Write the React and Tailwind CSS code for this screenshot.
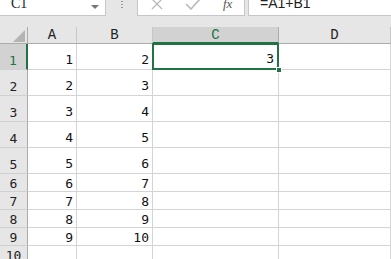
import React from 'react'

const rows = [
  { n: 1, a: '1', b: '2', c: '3', h: 'h-[26px]' },
  { n: 2, a: '2', b: '3', h: 'h-[26px]' },
  { n: 3, a: '3', b: '4', h: 'h-[26px]' },
  { n: 4, a: '4', b: '5', h: 'h-[26px]' },
  { n: 5, a: '5', b: '6', h: 'h-[26px]' },
  { n: 6, a: '6', b: '7', h: 'h-[18px]' },
  { n: 7, a: '7', b: '8', h: 'h-[18px]' },
  { n: 8, a: '8', b: '9', h: 'h-[18px]' },
  { n: 9, a: '9', b: '10', h: 'h-[18px]' },
  { n: 10, h: 'h-[18px]' },
]

const num = { fontFamily: '"DejaVu Sans Mono", monospace' }

function FormulaBar() {
  return (
    <div className="flex h-[24px] -mt-[8px] bg-[#e6e6e6]">
      <div className="w-[106px] bg-white border-r border-b border-[#c6c6c6] flex items-center justify-between pl-[11px] pr-[6px]">
        <span className="text-[14px] text-[#222]" style={{ fontFamily: '"Liberation Serif", serif' }}>C1</span>
        <span className="w-0 h-0 border-l-[4px] border-r-[4px] border-t-[4px] border-l-transparent border-r-transparent border-t-[#777] mt-[6px]" />
      </div>
      <div className="w-[31px] flex flex-col items-center justify-center gap-[2px]">
        <span className="w-[2px] h-[1px] bg-[#999]" />
        <span className="w-[2px] h-[1px] bg-[#999]" />
        <span className="w-[2px] h-[1px] bg-[#999]" />
      </div>
      <div className="w-[108px] bg-white border border-t-0 border-[#c6c6c6] flex items-center text-[#b9b9b9]">
        <svg width="12" height="12" viewBox="0 0 12 12" className="ml-[13px]" fill="none" stroke="currentColor" strokeWidth="1.3">
          <path d="M1 1 L11 11 M11 1 L1 11" />
        </svg>
        <svg width="16" height="12" viewBox="0 0 16 12" className="ml-[22px]" fill="none" stroke="currentColor" strokeWidth="1.6">
          <path d="M1 6 L6 11 L15 1" />
        </svg>
        <span className="ml-[22px] italic text-[13px] text-[#555]" style={{ fontFamily: '"Liberation Serif", serif' }}>fx</span>
      </div>
      <div className="w-[3px]" />
      <div className="flex-1 bg-white border-l border-b border-[#c6c6c6] flex items-center pl-[11px]">
        <span className="text-[14px] text-[#222]" style={{ fontFamily: '"Liberation Sans", sans-serif' }}>=A1+B1</span>
      </div>
    </div>
  )
}

function HeaderRow() {
  const cols = ['A', 'B', 'C', 'D']
  return (
    <div className="grid grid-cols-[28px_49px_76px_126px_1fr] h-[17px]">
      <div className="relative border-r border-b border-[#ababab] bg-[#e6e6e6]">
        <svg width="12" height="12" viewBox="0 0 12 12" className="absolute right-[2px] bottom-[1px]">
          <path d="M12 0 L12 12 L0 12 Z" fill="#b4b4b4" />
        </svg>
      </div>
      {cols.map(c => {
        const sel = c === 'C'
        return (
          <div
            key={c}
            className={
              sel
                ? 'flex items-end justify-center bg-[#d2d2d2] border-r border-[#ababab] border-b-2 border-b-[#217346] text-[#217346] text-[14px] leading-none'
                : 'flex items-end justify-center bg-[#e6e6e6] border-r border-b border-r-[#c8c8c8] border-b-[#ababab] text-[#222] text-[14px] leading-none pb-[1px]'
            }
            style={{ fontFamily: '"Liberation Mono", monospace' }}
          >
            {c}
          </div>
        )
      })}
    </div>
  )
}

function Cell({ value, short }) {
  return (
    <div className={`flex items-end justify-end pr-[3px] ${short ? 'pb-[1px]' : 'pb-[3px]'} border-r border-b border-[#d4d4d4] text-[13px] leading-none text-[#111]`} style={num}>
      {value}
    </div>
  )
}

function DataRow({ r }) {
  const short = r.h === 'h-[18px]'
  const selRow = r.n === 1
  return (
    <div className={`grid grid-cols-[28px_49px_76px_126px_1fr] ${r.h}`}>
      <div
        className={`flex items-end justify-center ${short ? 'pb-[1px]' : 'pb-[2px]'} border-b border-[#d0d0d0] text-[13px] leading-none ${
          selRow ? 'bg-[#d2d2d2] text-[#217346] border-r-2 border-r-[#217346]' : 'bg-[#e6e6e6] text-[#222] border-r border-r-[#ababab]'
        }`}
        style={num}
      >
        {r.n}
      </div>
      <Cell value={r.a} short={short} />
      <Cell value={r.b} short={short} />
      {r.c ? (
        <div className="relative">
          <div className="absolute -left-[1px] -top-[1px] right-0 bottom-0 border-2 border-[#217346] flex items-end justify-end pr-[3px] pb-[3px] text-[13px] leading-none text-[#111]" style={num}>
            {r.c}
          </div>
          <div className="absolute -right-[3px] -bottom-[3px] w-[6px] h-[6px] bg-[#217346] border border-white" />
        </div>
      ) : (
        <Cell short={short} />
      )}
      <Cell short={short} />
    </div>
  )
}

export default function App() {
  return (
    <div className="w-[391px] h-[259px] overflow-hidden bg-[#e6e6e6] relative">
      <FormulaBar />
      <div className="h-[11px]" />
      <div className="bg-white">
        <HeaderRow />
        {rows.map(r => (
          <DataRow key={r.n} r={r} />
        ))}
      </div>
    </div>
  )
}
